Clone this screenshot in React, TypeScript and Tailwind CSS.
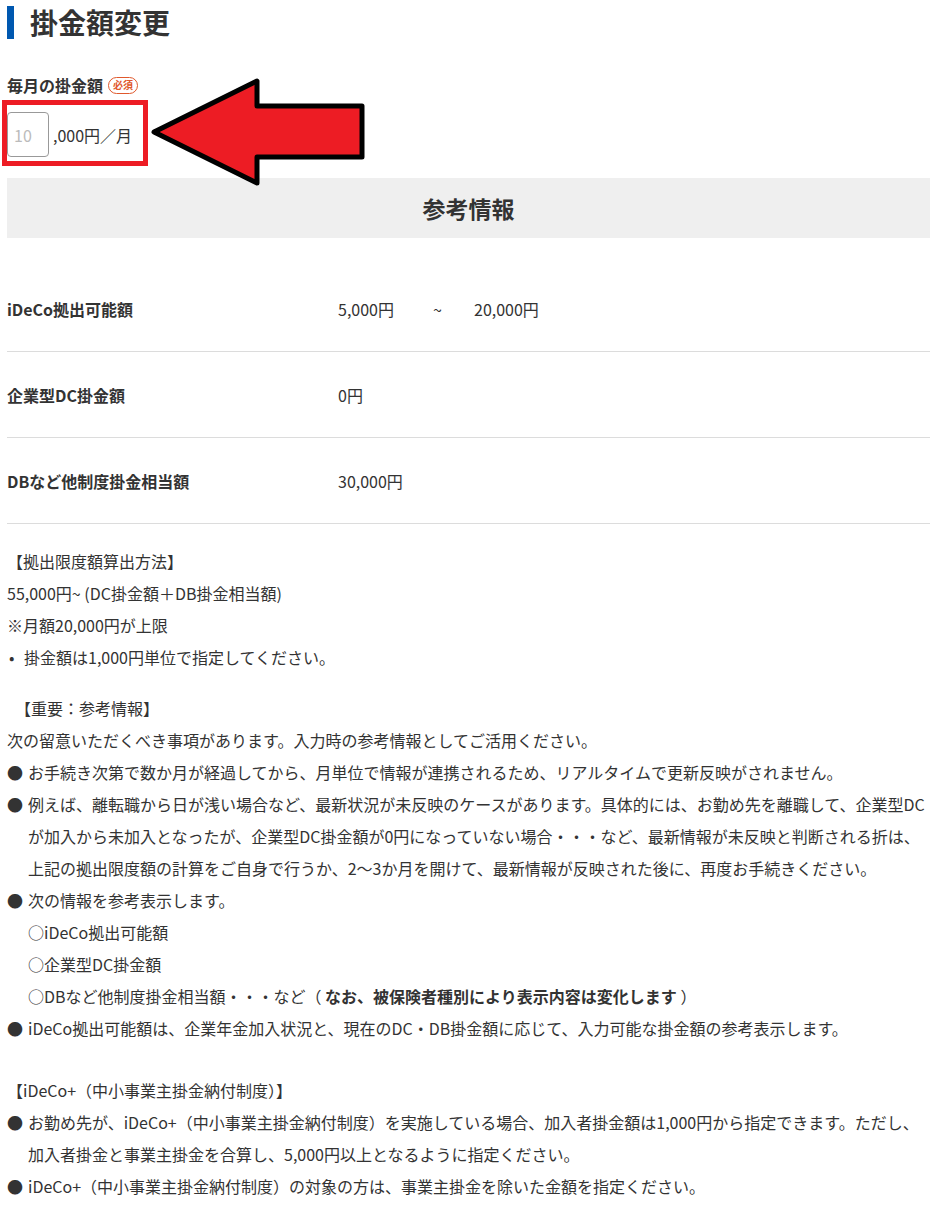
import React from 'react';

function Bullet({ mark = '●', children }: { mark?: string; children: React.ReactNode }) {
  return (
    <div className="flex">
      <span className="w-[21px] shrink-0">{mark}</span>
      <div className="whitespace-nowrap">{children}</div>
    </div>
  );
}

function Row({ label, children }: { label: string; children: React.ReactNode }) {
  return (
    <div className="flex h-[86px] items-center border-b border-[#dcdcdc]">
      <div className="w-[331px] shrink-0 text-[16px] font-bold">{label}</div>
      <div className="flex text-[16px]">{children}</div>
    </div>
  );
}

export default function App() {
  return (
    <div className="relative min-h-[1208px] w-[937px] bg-white px-[7px] text-[#333] font-['Noto_Sans_CJK_JP','Noto_Sans',sans-serif]">
      {/* Title */}
      <div className="flex items-center pt-[6px]">
        <span className="block h-[33px] w-[7px] bg-[#0058b0]" />
        <h1 className="ml-[16px] text-[28px] font-bold leading-[33px]">掛金額変更</h1>
      </div>

      {/* Monthly amount */}
      <div className="mt-[37px] flex h-[18px] items-center">
        <span className="text-[16px] font-bold leading-[18px]">毎月の掛金額</span>
        <span className="ml-[5px] flex h-[17px] items-center rounded-full border border-[#e0582c] px-[4px] text-[10px] font-bold leading-none text-[#e0582c]">
          必須
        </span>
      </div>
      <div className="mt-[18px] flex h-[45px] items-center">
        <input
          placeholder="10"
          className="h-[45px] w-[42px] rounded-[4px] border border-[#999] bg-white px-[6px] text-[16px] outline-none placeholder:text-[#bbb]"
        />
        <span className="ml-[4px] text-[16px]">,000円／月</span>
      </div>

      {/* Annotation overlay */}
      <div className="pointer-events-none absolute left-[2px] top-[100px] h-[66px] w-[146px] border-[5px] border-[#ed1c24]" />
      <svg
        className="pointer-events-none absolute left-0 top-0"
        width="937"
        height="200"
        viewBox="0 0 937 200"
      >
        <polygon
          points="154,132 257,81 257,106 362,106 362,157 257,157 257,183"
          fill="#ed1c24"
          stroke="#000"
          strokeWidth="5"
          strokeLinejoin="round"
        />
      </svg>

      {/* Reference info */}
      <div className="mt-[21px] flex h-[60px] items-center justify-center bg-[#efefef] text-[23px] font-bold">
        参考情報
      </div>

      <div className="mt-[28px]">
        <Row label="iDeCo拠出可能額">
          <span className="w-[95px]">5,000円</span>
          <span className="w-[41px]">~</span>
          <span>20,000円</span>
        </Row>
        <Row label="企業型DC掛金額">
          <span>0円</span>
        </Row>
        <Row label="DBなど他制度掛金相当額">
          <span>30,000円</span>
        </Row>
      </div>

      {/* Notes */}
      <div className="-mr-[7px] mt-[21px] text-[16px] leading-[32px]">
        <div>【拠出限度額算出方法】</div>
        <div>55,000円~ (DC掛金額＋DB掛金相当額)</div>
        <div>※月額20,000円が上限</div>
        <div className="flex">
          <span className="w-[17px] shrink-0 pl-[2px]">•</span>
          <span>掛金額は1,000円単位で指定してください。</span>
        </div>

        <div className="ml-[8px] mt-[19px]">【重要：参考情報】</div>
        <div>次の留意いただくべき事項があります。入力時の参考情報としてご活用ください。</div>
        <Bullet>お手続き次第で数か月が経過してから、月単位で情報が連携されるため、リアルタイムで更新反映がされません。</Bullet>
        <Bullet>
          例えば、離転職から日が浅い場合など、最新状況が未反映のケースがあります。具体的には、お勤め先を離職して、企業型DC
          <br />
          が加入から未加入となったが、企業型DC掛金額が0円になっていない場合・・・など、最新情報が未反映と判断される折は、
          <br />
          上記の拠出限度額の計算をご自身で行うか、2〜3か月を開けて、最新情報が反映された後に、再度お手続きください。
        </Bullet>
        <Bullet>次の情報を参考表示します。</Bullet>
        <div className="pl-[21px]">○iDeCo拠出可能額</div>
        <div className="pl-[21px]">○企業型DC掛金額</div>
        <div className="pl-[21px]">
          ○DBなど他制度掛金相当額・・・など（ <span className="font-bold">なお、被保険者種別により表示内容は変化します</span> ）
        </div>
        <Bullet>iDeCo拠出可能額は、企業年金加入状況と、現在のDC・DB掛金額に応じて、入力可能な掛金額の参考表示します。</Bullet>

        <div className="mt-[30px]">【iDeCo+（中小事業主掛金納付制度）】</div>
        <Bullet>
          お勤め先が、iDeCo+（中小事業主掛金納付制度）を実施している場合、加入者掛金額は1,000円から指定できます。ただし、
          <br />
          加入者掛金と事業主掛金を合算し、5,000円以上となるように指定ください。
        </Bullet>
        <Bullet>iDeCo+（中小事業主掛金納付制度）の対象の方は、事業主掛金を除いた金額を指定ください。</Bullet>
      </div>
    </div>
  );
}
